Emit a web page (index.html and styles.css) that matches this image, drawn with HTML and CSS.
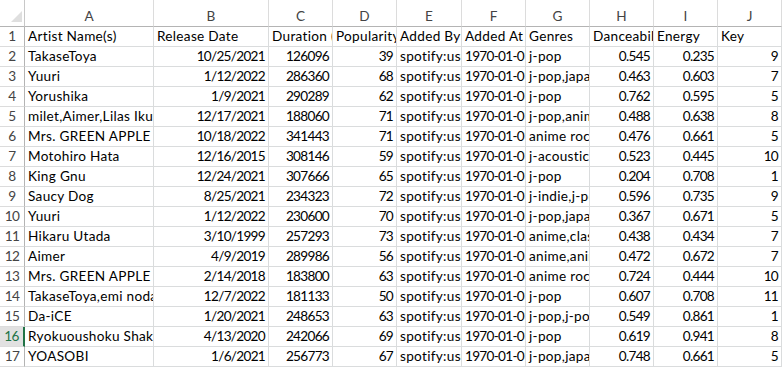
FILE: index.html
```html
<!DOCTYPE html>
<html>
<head>
<meta charset="utf-8">
<link rel="stylesheet" href="styles.css">
</head>
<body>
<div class="sheet">
  <div class="corner"><span class="tri"></span></div>
  <div class="ch">A</div><div class="ch">B</div><div class="ch">C</div><div class="ch">D</div><div class="ch">E</div><div class="ch">F</div><div class="ch">G</div><div class="ch">H</div><div class="ch">I</div><div class="ch">J</div>

  <div class="rh">1</div><div class="c">Artist Name(s)</div><div class="c">Release Date</div><div class="c">Duration (ms)</div><div class="c">Popularity</div><div class="c">Added By</div><div class="c">Added At</div><div class="c">Genres</div><div class="c">Danceability</div><div class="c">Energy</div><div class="c">Key</div>

  <div class="rh">2</div><div class="c">TakaseToya</div><div class="c n">10/25/2021</div><div class="c n">126096</div><div class="c n">39</div><div class="c">spotify:user:</div><div class="c t">1970-01-01T00:00:00Z</div><div class="c">j-pop</div><div class="c n">0.545</div><div class="c n">0.235</div><div class="c n">9</div>

  <div class="rh">3</div><div class="c">Yuuri</div><div class="c n">1/12/2022</div><div class="c n">286360</div><div class="c n">68</div><div class="c">spotify:user:</div><div class="c t">1970-01-01T00:00:00Z</div><div class="c">j-pop,japanese</div><div class="c n">0.463</div><div class="c n">0.603</div><div class="c n">7</div>

  <div class="rh">4</div><div class="c">Yorushika</div><div class="c n">1/9/2021</div><div class="c n">290289</div><div class="c n">62</div><div class="c">spotify:user:</div><div class="c t">1970-01-01T00:00:00Z</div><div class="c">j-pop</div><div class="c n">0.762</div><div class="c n">0.595</div><div class="c n">5</div>

  <div class="rh">5</div><div class="c">milet,Aimer,Lilas Ikuta</div><div class="c n">12/17/2021</div><div class="c n">188060</div><div class="c n">71</div><div class="c">spotify:user:</div><div class="c t">1970-01-01T00:00:00Z</div><div class="c">j-pop,anime</div><div class="c n">0.488</div><div class="c n">0.638</div><div class="c n">8</div>

  <div class="rh">6</div><div class="c">Mrs. GREEN APPLE</div><div class="c n">10/18/2022</div><div class="c n">341443</div><div class="c n">71</div><div class="c">spotify:user:</div><div class="c t">1970-01-01T00:00:00Z</div><div class="c">anime rock</div><div class="c n">0.476</div><div class="c n">0.661</div><div class="c n">5</div>

  <div class="rh">7</div><div class="c">Motohiro Hata</div><div class="c n">12/16/2015</div><div class="c n">308146</div><div class="c n">59</div><div class="c">spotify:user:</div><div class="c t">1970-01-01T00:00:00Z</div><div class="c">j-acoustic,j-pop</div><div class="c n">0.523</div><div class="c n">0.445</div><div class="c n">10</div>

  <div class="rh">8</div><div class="c">King Gnu</div><div class="c n">12/24/2021</div><div class="c n">307666</div><div class="c n">65</div><div class="c">spotify:user:</div><div class="c t">1970-01-01T00:00:00Z</div><div class="c">j-pop</div><div class="c n">0.204</div><div class="c n">0.708</div><div class="c n">1</div>

  <div class="rh">9</div><div class="c">Saucy Dog</div><div class="c n">8/25/2021</div><div class="c n">234323</div><div class="c n">72</div><div class="c">spotify:user:</div><div class="c t">1970-01-01T00:00:00Z</div><div class="c">j-indie,j-pop</div><div class="c n">0.596</div><div class="c n">0.735</div><div class="c n">9</div>

  <div class="rh">10</div><div class="c">Yuuri</div><div class="c n">1/12/2022</div><div class="c n">230600</div><div class="c n">70</div><div class="c">spotify:user:</div><div class="c t">1970-01-01T00:00:00Z</div><div class="c">j-pop,japanese</div><div class="c n">0.367</div><div class="c n">0.671</div><div class="c n">5</div>

  <div class="rh">11</div><div class="c">Hikaru Utada</div><div class="c n">3/10/1999</div><div class="c n">257293</div><div class="c n">73</div><div class="c">spotify:user:</div><div class="c t">1970-01-01T00:00:00Z</div><div class="c">anime,classical</div><div class="c n">0.438</div><div class="c n">0.434</div><div class="c n">7</div>

  <div class="rh">12</div><div class="c">Aimer</div><div class="c n">4/9/2019</div><div class="c n">289986</div><div class="c n">56</div><div class="c">spotify:user:</div><div class="c t">1970-01-01T00:00:00Z</div><div class="c">anime,anime rock</div><div class="c n">0.472</div><div class="c n">0.672</div><div class="c n">7</div>

  <div class="rh">13</div><div class="c">Mrs. GREEN APPLE</div><div class="c n">2/14/2018</div><div class="c n">183800</div><div class="c n">63</div><div class="c">spotify:user:</div><div class="c t">1970-01-01T00:00:00Z</div><div class="c">anime rock</div><div class="c n">0.724</div><div class="c n">0.444</div><div class="c n">10</div>

  <div class="rh">14</div><div class="c">TakaseToya,emi noda</div><div class="c n">12/7/2022</div><div class="c n">181133</div><div class="c n">50</div><div class="c">spotify:user:</div><div class="c t">1970-01-01T00:00:00Z</div><div class="c">j-pop</div><div class="c n">0.607</div><div class="c n">0.708</div><div class="c n">11</div>

  <div class="rh">15</div><div class="c">Da-iCE</div><div class="c n">1/20/2021</div><div class="c n">248653</div><div class="c n">63</div><div class="c">spotify:user:</div><div class="c t">1970-01-01T00:00:00Z</div><div class="c">j-pop,j-pop</div><div class="c n">0.549</div><div class="c n">0.861</div><div class="c n">1</div>

  <div class="rh sel">16</div><div class="c">Ryokuoushoku Shakai</div><div class="c n">4/13/2020</div><div class="c n">242066</div><div class="c n">69</div><div class="c">spotify:user:</div><div class="c t">1970-01-01T00:00:00Z</div><div class="c">j-pop</div><div class="c n">0.619</div><div class="c n">0.941</div><div class="c n">8</div>

  <div class="rh">17</div><div class="c">YOASOBI</div><div class="c n">1/6/2021</div><div class="c n">256773</div><div class="c n">67</div><div class="c">spotify:user:</div><div class="c t">1970-01-01T00:00:00Z</div><div class="c">j-pop,japanese</div><div class="c n">0.748</div><div class="c n">0.661</div><div class="c n">5</div>
</div>
</body>
</html>
```

FILE: styles.css
```css
html, body {
  margin: 0;
  padding: 0;
  background: #ffffff;
}

.sheet {
  display: grid;
  grid-template-columns: 25px 129px 115px 64px 64px 65px 64px 64px 64px 64px 64px;
  grid-auto-rows: 20px;
  grid-template-rows: 27px;
  font-family: "Lato", "Liberation Sans", sans-serif;
  font-size: 13.6px;
  color: #000;
  width: 782px;
}

.corner {
  border-right: 1px solid #c8c8c8;
  border-bottom: 1px solid #b4b4b4;
  box-sizing: border-box;
  position: relative;
}

.tri {
  position: absolute;
  right: 2px;
  bottom: 4px;
  width: 0;
  height: 0;
  border-left: 11px solid transparent;
  border-bottom: 11px solid #dfdfdf;
}

.ch {
  box-sizing: border-box;
  border-right: 1px solid #dcdcdc;
  border-bottom: 1px solid #b4b4b4;
  text-align: center;
  color: #444;
  padding-top: 7px;
  line-height: 19px;
}

.rh {
  box-sizing: border-box;
  border-right: 1px solid #b4b4b4;
  border-bottom: 1px solid #dcdcdc;
  text-align: center;
  color: #444;
  line-height: 19px;
  letter-spacing: -0.6px;
}

.rh.sel {
  background: #e1e1e1;
  color: #217346;
  border-right: 2px solid #217346;
}

.c {
  box-sizing: border-box;
  border-right: 1px solid #dadcdd;
  border-bottom: 1px solid #dadcdd;
  padding: 0 2px 0 3px;
  line-height: 19px;
  white-space: nowrap;
  overflow: hidden;
  letter-spacing: 0.3px;
}

.n {
  text-align: right;
  letter-spacing: -0.7px;
  padding-right: 3px;
}

.t {
  letter-spacing: -0.7px;
}
```
